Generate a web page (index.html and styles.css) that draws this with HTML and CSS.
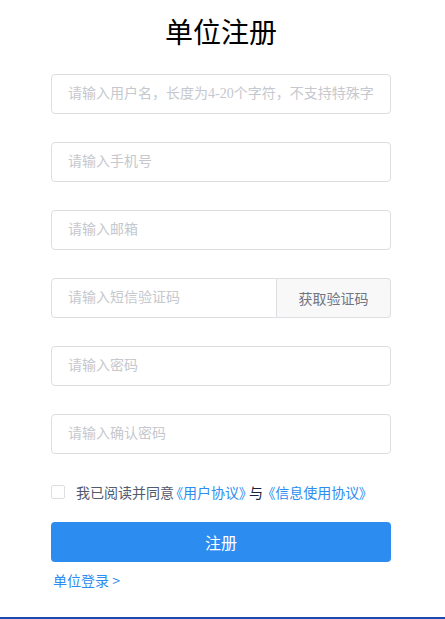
FILE: index.html
```html
<!DOCTYPE html>
<html lang="zh-CN">
<head>
<meta charset="utf-8">
<title>单位注册</title>
<link rel="stylesheet" href="styles.css">
</head>
<body>
<div class="page">
  <div class="form">
    <h1 class="title">单位注册</h1>
    <div class="field"><input class="input" type="text" placeholder="请输入用户名，长度为4-20个字符，不支持特殊字符"></div>
    <div class="field"><input class="input" type="text" placeholder="请输入手机号"></div>
    <div class="field"><input class="input" type="text" placeholder="请输入邮箱"></div>
    <div class="field group">
      <input class="input input-grouped" type="text" placeholder="请输入短信验证码">
      <button class="append" type="button">获取验证码</button>
    </div>
    <div class="field"><input class="input" type="password" placeholder="请输入密码"></div>
    <div class="field"><input class="input" type="password" placeholder="请输入确认密码"></div>
    <label class="agree">
      <span class="checkbox"></span>
      <span class="agree-text">我已阅读并同意<a class="link" href="#">《用户协议》</a><span class="and">与</span> <a class="link" href="#">《信息使用协议》</a></span>
    </label>
    <button class="submit" type="button">注册</button>
    <a class="login" href="#">单位登录 &gt;</a>
  </div>
</div>
<div class="footer"></div>
</body>
</html>
```
FILE: styles.css
```css
html, body {
  margin: 0;
  padding: 0;
  overflow: hidden;
  background: #fff;
}
body {
  font-family: "Liberation Serif", "Noto Sans CJK SC", serif;
  font-size: 14px;
  color: #515a6e;
}
.page {
  height: 617px;
}
.form {
  width: 340px;
  margin-left: 51px;
  display: flex;
  flex-direction: column;
}
.title {
  margin: 11px 0 23px;
  font-family: "Noto Sans CJK SC", sans-serif;
  font-weight: normal;
  font-size: 28px;
  line-height: 40px;
  text-align: center;
  color: #000;
}
.field {
  margin-bottom: 28px;
  display: flex;
}
.input {
  box-sizing: border-box;
  width: 100%;
  height: 40px;
  padding: 0 16px;
  border: 1px solid #dcdee2;
  border-radius: 4px;
  font-family: "Liberation Serif", "Noto Sans CJK SC", serif;
  font-size: 14px;
  color: #515a6e;
  background: #fff;
  outline: none;
}
.input::placeholder {
  color: #c5c8ce;
}
.input-grouped {
  flex: 1;
  width: auto;
  min-width: 0;
  border-radius: 4px 0 0 4px;
}
.append {
  width: 114px;
  height: 40px;
  box-sizing: border-box;
  border: 1px solid #dcdee2;
  border-left: none;
  border-radius: 0 4px 4px 0;
  background: #f8f8f9;
  color: #6f7583;
  font-family: "Noto Sans CJK SC", sans-serif;
  font-size: 14px;
  padding: 0;
}
.agree {
  display: flex;
  align-items: center;
  height: 20px;
  margin-bottom: 20px;
  font-family: "Noto Sans CJK SC", sans-serif;
  font-size: 14px;
}
.checkbox {
  box-sizing: border-box;
  width: 14px;
  height: 14px;
  border: 1px solid #dcdee2;
  border-radius: 2px;
  background: #fff;
  margin-right: 11px;
}
.agree-text {
  color: #515a6e;
  white-space: nowrap;
}
.link {
  color: #2d8cf0;
  text-decoration: none;
  font-feature-settings: "palt" 1;
  padding: 0 3px 0 2px;
}
.and {
  color: #17233d;
}
.submit {
  height: 40px;
  border: none;
  border-radius: 4px;
  background: #2d8cf0;
  color: #fff;
  font-family: "Noto Sans CJK SC", sans-serif;
  font-size: 16px;
  padding: 0;
  margin-bottom: 8px;
}
.login {
  align-self: flex-start;
  margin-left: 2px;
  line-height: 20px;
  font-family: "Noto Sans CJK SC", sans-serif;
  font-size: 14px;
  color: #2d8cf0;
  text-decoration: none;
}
.footer {
  height: 40px;
  background: #1c4ab0;
}
```
